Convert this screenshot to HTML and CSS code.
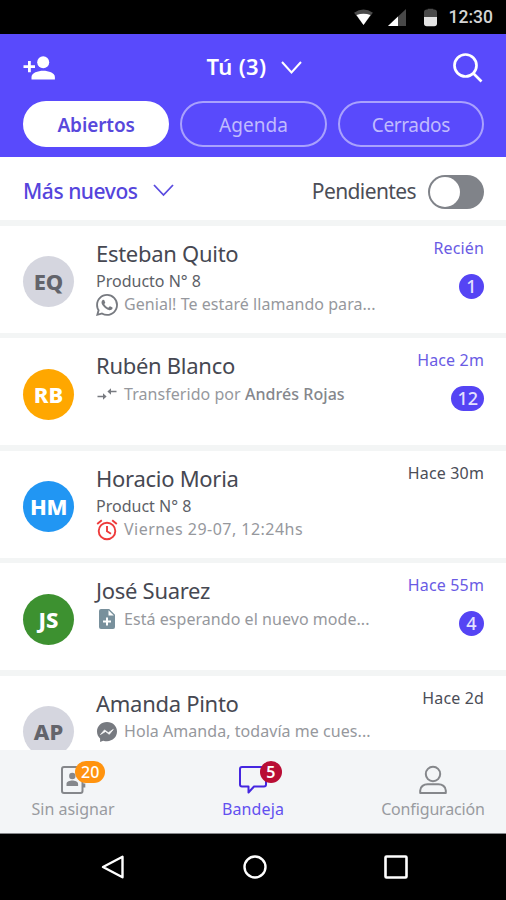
FILE: index.html
```
<!DOCTYPE html>
<html lang="es">
<head>
<meta charset="utf-8">
<title>Bandeja</title>
<link rel="stylesheet" href="styles.css">
</head>
<body>
<div class="phone">
  <div class="status">
    <svg class="wifi" width="19" height="16" viewBox="0 0 20 17"><path d="M0 4Q10-3 20 4L10 17Z" fill="#4a4a4a"/><path d="M2.500 6.500Q10 3.500 17.500 6.500L10 17Z" fill="#fff"/></svg>
    <svg class="signal" width="18" height="17" viewBox="0 0 18 17"><path d="M18 0V17H0Z" fill="#484848"/><path d="M10 7.600V17H0Z" fill="#fff"/></svg>
    <svg class="battery" width="13" height="19" viewBox="0 0 14 19"><path d="M4 0h6v1h1a3 3 0 0 1 3 3v5H0V4a3 3 0 0 1 3-3h1z" fill="#4a4a4a"/><path d="M0 9h14v7a3 3 0 0 1-3 3H3a3 3 0 0 1-3-3z" fill="#e4e4e4"/></svg>
    <span>12:30</span>
  </div>
  <header class="header">
    <div class="titlebar">
      <svg class="add" width="32" height="24" viewBox="0 0 32 24" fill="#fff"><circle cx="20.200" cy="6.300" r="6"/><path d="M8.500 23.500v-2.500c0-4 6.500-6.200 11.700-6.200s11.700 2.200 11.700 6.200v2.500z"/><path d="M5 5h2.800v4.200H12V12H7.800v4.200H5V12H.5V9.200H5z"/></svg>
      <div class="title"><span>Tú (3)</span><svg width="21" height="13" viewBox="0 0 21 13"><path d="M1 1l9.500 10.500L20 1" fill="none" stroke="#fff" stroke-width="2"/></svg></div>
      <svg class="search" width="30" height="30" viewBox="0 0 30 30" fill="none" stroke="#fff" stroke-width="2.700"><circle cx="12.500" cy="12.500" r="11"/><path d="M20 20l8.500 8.500"/></svg>
    </div>
    <nav class="tabs"><div class="tab on">Abiertos</div><div class="tab agenda">Agenda</div><div class="tab">Cerrados</div></nav>
  </header>
  <div class="filter">
    <div class="sort"><span>Más nuevos</span><svg width="21" height="13" viewBox="0 0 21 13"><path d="M1 1l9.500 10L20 1" fill="none" stroke="#5a4be0" stroke-width="1.800"/></svg></div>
    <div class="pending"><span>Pendientes</span><div class="switch"></div></div>
  </div>
  <main class="list">
    <article class="row">
      <div class="avatar grey">EQ</div>
      <div class="body">
        <div class="name">Esteban Quito</div>
        <div class="product">Producto N° 8</div>
        <div class="msg"><svg width="22" height="22" viewBox="0 0 24 24" fill="#777a80"><path d="M17.472 14.382c-.297-.149-1.758-.867-2.030-.967-.273-.099-.471-.148-.670.150-.197.297-.767.966-.940 1.164-.173.199-.347.223-.644.075-.297-.150-1.255-.463-2.390-1.475-.883-.788-1.480-1.761-1.653-2.059-.173-.297-.018-.458.130-.606.134-.133.298-.347.446-.520.149-.174.198-.298.298-.497.099-.198.050-.371-.025-.520-.075-.149-.669-1.612-.916-2.207-.242-.579-.487-.500-.669-.510-.173-.008-.371-.010-.570-.010-.198 0-.520.074-.792.372-.272.297-1.040 1.016-1.040 2.479 0 1.462 1.065 2.875 1.213 3.074.149.198 2.096 3.200 5.077 4.487.709.306 1.262.489 1.694.625.712.227 1.360.195 1.871.118.571-.085 1.758-.719 2.006-1.413.248-.694.248-1.289.173-1.413-.074-.124-.272-.198-.570-.347zM12.050 21.785a9.870 9.870 0 0 1-5.031-1.378l-.361-.214-3.741.982.998-3.648-.235-.374a9.860 9.860 0 0 1-1.510-5.260c.001-5.450 4.436-9.884 9.888-9.884a9.825 9.825 0 0 1 6.988 2.898 9.825 9.825 0 0 1 2.893 6.994c-.003 5.450-4.437 9.884-9.889 9.884zm8.413-18.297A11.815 11.815 0 0 0 12.050 0C5.495 0 .160 5.335.157 11.892c0 2.096.547 4.142 1.588 5.945L.057 24l6.305-1.654a11.882 11.882 0 0 0 5.683 1.448h.005c6.554 0 11.890-5.335 11.893-11.893a11.821 11.821 0 0 0-3.480-8.413z"/></svg><span>Genial! Te estaré llamando para...</span></div>
      </div>
      <div class="meta"><div class="time unread">Recién</div><div class="count">1</div></div>
    </article>
    <article class="row">
      <div class="avatar orange">RB</div>
      <div class="body">
        <div class="name">Rubén Blanco</div>
        <div class="msg"><svg width="22" height="22" viewBox="0 0 22 22" fill="none" stroke="#777a80" stroke-width="1.500"><path d="M1.500 13.500h6M20.500 8.500h-6"/><path d="M7 10.300l3.600 3.200L7 16.700zM15 5.300l-3.600 3.200 3.600 3.200z" fill="#777a80" stroke="none"/></svg><span>Transferido por <b>Andrés Rojas</b></span></div>
      </div>
      <div class="meta"><div class="time unread">Hace 2m</div><div class="count">12</div></div>
    </article>
    <article class="row">
      <div class="avatar blue">HM</div>
      <div class="body">
        <div class="name">Horacio Moria</div>
        <div class="product">Product N° 8</div>
        <div class="msg"><svg width="22" height="22" viewBox="0 0 22 22" fill="none" stroke="#ee3b3b" stroke-width="1.900"><circle cx="11" cy="12" r="8.300"/><path d="M11 7v5.300l4 2.400M1.200 5L5.800 1.200M20.800 5l-4.600-3.800"/></svg><span class="date">Viernes 29-07, 12:24hs</span></div>
      </div>
      <div class="meta"><div class="time">Hace 30m</div></div>
    </article>
    <article class="row">
      <div class="avatar green">JS</div>
      <div class="body">
        <div class="name">José Suarez</div>
        <div class="msg"><svg width="22" height="22" viewBox="0 0 22 22"><path d="M5 1h8.200L19 6.800V19a2 2 0 0 1-2 2H5a2 2 0 0 1-2-2V3a2 2 0 0 1 2-2z" fill="#78909c"/><path d="M12.500 2.200v5.300h5.300z" fill="#fff"/><path d="M10 9.500h2v3h3v2h-3v3h-2v-3H7v-2h3z" fill="#fff"/></svg><span>Está esperando el nuevo mode...</span></div>
      </div>
      <div class="meta"><div class="time unread">Hace 55m</div><div class="count">4</div></div>
    </article>
    <article class="row last">
      <div class="avatar grey">AP</div>
      <div class="body">
        <div class="name">Amanda Pinto</div>
        <div class="msg"><svg width="22" height="22" viewBox="0 0 22 22"><path d="M11 1C5.200 1 1 5.100 1 10.600c0 2.900 1.200 5.300 3.100 7V21l3.100-1.300c1.200.4 2.500.5 3.800.5 5.800 0 10-4.100 10-9.600S16.800 1 11 1z" fill="#777a80"/><path d="M4.500 13.500l4-4.600 3.800 2.800 5-3.300-4 4.900-3.800-2.800z" fill="#fff" stroke="#fff" stroke-width=".7"/></svg><span>Hola Amanda, todavía me cues...</span></div>
      </div>
      <div class="meta"><div class="time">Hace 2d</div></div>
    </article>
  </main>
  <nav class="nav">
    <div class="item">
      <div class="ico"><svg width="30" height="30" viewBox="0 0 30 30"><rect x="4" y="2" width="20.500" height="26" rx="2" fill="none" stroke="#85878b" stroke-width="2"/><circle cx="14.300" cy="11" r="3.200" fill="#85878b"/><path d="M8.500 21v-2c0-2.600 3.500-3.500 5.800-3.500s5.800.9 5.800 3.500v2zM25 18.500h2.300v4H25z" fill="#85878b"/></svg><span class="dot orange">20</span></div>
      <div>Sin asignar</div>
    </div>
    <div class="item active">
      <div class="ico"><svg width="30" height="30" viewBox="0 0 30 30"><path d="M4 2h22a2 2 0 0 1 2 2v15.500a2 2 0 0 1-2 2H16L10.500 27.500V21.500H4a2 2 0 0 1-2-2V4a2 2 0 0 1 2-2z" fill="none" stroke="#4526e0" stroke-width="2" stroke-linejoin="round"/></svg><span class="dot red">5</span></div>
      <div>Bandeja</div>
    </div>
    <div class="item config">
      <div class="ico"><svg width="30" height="30" viewBox="0 0 30 30" fill="none" stroke="#85878b" stroke-width="2"><circle cx="15" cy="9" r="7.200"/><path d="M2.200 28v-2.500c0-4 3.800-6.200 7.300-6.200h11c3.500 0 7.300 2.200 7.300 6.200V28z" stroke-linejoin="round"/></svg></div>
      <div>Configuración</div>
    </div>
  </nav>
  <div class="system">
    <svg width="24" height="24" viewBox="0 0 24 24"><path d="M21.500 1.800v20.400L2 12z" fill="none" stroke="#fff" stroke-width="2.400" stroke-linejoin="round"/></svg>
    <svg width="24" height="24" viewBox="0 0 24 24"><circle cx="12" cy="12" r="10.500" fill="none" stroke="#fff" stroke-width="2.400"/></svg>
    <svg width="24" height="24" viewBox="0 0 24 24"><rect x="1.500" y="1.500" width="21" height="21" rx="1" fill="none" stroke="#fff" stroke-width="2.600"/></svg>
  </div>
</div>
</body>
</html>
```
FILE: styles.css
```
* { box-sizing: border-box; }
body { margin: 0; background: #000; font-family: "Noto Sans", sans-serif; font-size: 16px; }
svg { display: block; flex: none; }
.phone { width: 506px; height: 900px; display: flex; flex-direction: column; overflow: hidden; white-space: nowrap; }

.status { height: 34px; flex: none; display: flex; align-items: center; justify-content: flex-end; padding-right: 13px; color: #d4d4d4; font: 500 17.5px/34px Roboto, sans-serif; background: #000; }
.wifi { margin-right: 15px; }
.signal { margin-right: 18px; }
.battery { margin-right: 12px; }

.header { height: 123px; flex: none; background: #594afc; padding: 0 22px 0 23px; }
.titlebar { height: 67px; display: flex; align-items: center; justify-content: space-between; }
.title { display: flex; align-items: center; gap: 15px; color: #fff; font-weight: 600; font-size: 22px; margin-left: 1px; letter-spacing: .3px; }
.title span { margin-top: -3px; }
.search { margin-right: 1px; }
.tabs { display: flex; gap: 11px; }
.tab { flex: 1 1 0; height: 46px; border: 2px solid #a9a1fd; border-radius: 23px; color: #c0bbfe; font-size: 19px; line-height: 44px; text-align: center; letter-spacing: -.35px; }
.tab.agenda { letter-spacing: .05px; }
.tab.on { background: #fff; border-color: #fff; color: #5848dc; font-weight: 600; letter-spacing: -.1px; }

.filter { height: 63px; flex: none; background: #fff; padding: 0 22px 0 23px; display: flex; align-items: center; justify-content: space-between; font-size: 21px; }
.sort, .pending { display: flex; align-items: center; }
.sort span, .pending span { margin-top: 5px; }
.sort { gap: 15px; color: #5545dc; font-weight: 500; letter-spacing: -.45px; }
.sort svg { margin-top: 4px; }
.pending { gap: 12px; color: #4c4e57; letter-spacing: -.6px; }
.switch { width: 56px; height: 34px; margin-top: 6px; border-radius: 17px; background: #808389; padding: 2px; }
.switch::before { content: ""; display: block; width: 30px; height: 30px; border-radius: 50%; background: #fff; }

.list { height: 530px; flex: none; overflow: hidden; background: #f3f5f5; padding-top: 5.5px; display: flex; flex-direction: column; gap: 5.5px; }
.row { height: 107px; flex: none; background: #fff; display: flex; padding: 0 22px 0 23px; }
.row.last { height: 74.5px; overflow: hidden; }
.avatar { width: 51px; height: 51px; margin-top: 30.5px; border-radius: 50%; text-align: center; font-weight: 800; font-size: 22px; line-height: 51px; color: #fff; flex: none; }
.grey { background: #d5d6df; color: #63646b; }
.orange { background: #ffa700; }
.blue { background: #2196f3; letter-spacing: -.5px; }
.green { background: #3d9130; }
.body { flex: 1; margin-left: 22px; padding-top: 13px; }
.name { font-size: 22px; line-height: 28px; margin-bottom: 3.5px; letter-spacing: -.28px; color: #464852; }
.product { line-height: 23px; color: #5d5f67; }
.msg { height: 23px; line-height: 23px; display: flex; align-items: center; gap: 6px; color: #96989d; letter-spacing: .05px; }
.msg b { font-weight: 500; color: #85878c; }
.date { letter-spacing: .47px; }
.meta { display: flex; flex-direction: column; align-items: flex-end; padding-top: 11px; }
.time { line-height: 22px; color: #4b4d57; letter-spacing: .15px; }
.time.unread { color: #6a5be4; }
.count { min-width: 25px; height: 25px; margin-top: 15px; padding: 0 6px; border-radius: 13px; background: #5544f4; color: #e4e1ff; font-weight: 500; font-size: 18px; line-height: 25px; text-align: center; }

.nav { height: 84px; flex: none; background: #f3f5f7; border-bottom: 1px solid #85878b; padding: 0 13px; display: grid; grid-template-columns: 120px 1fr 120px; text-align: center; color: #999ba0; }
.item { padding-top: 15px; line-height: 24px; }
.item.active { color: #6250f0; letter-spacing: .1px; }
.item.config { letter-spacing: -.15px; }
.ico { width: 30px; height: 30px; margin: 0 auto 2px; position: relative; }
.dot { position: absolute; top: -4px; left: 17px; height: 22px; min-width: 22px; padding: 0 5px; border-radius: 11px; color: #fff; font-size: 16px; font-weight: 500; line-height: 22px; }
.dot.orange { background: #ff930f; padding: 0 6px; }
.dot.red { background: #b90d35; left: 22px; font-weight: 600; }

.system { height: 66px; flex: none; background: #000; display: flex; justify-content: space-between; align-items: center; padding: 0 98px 0 101px; }
```
